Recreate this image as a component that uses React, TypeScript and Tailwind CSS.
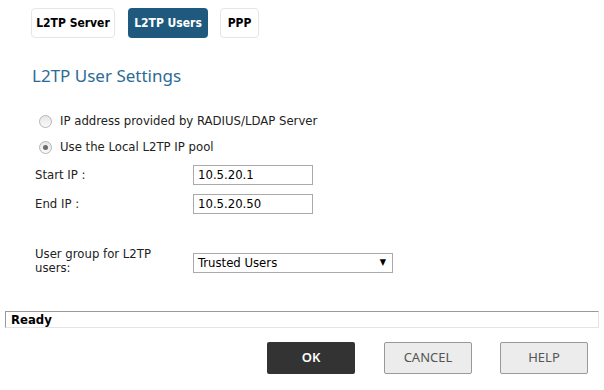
import React from "react";

const body = { fontFamily: '"DejaVu Sans Condensed", "DejaVu Sans", Tahoma, sans-serif' };
const seg = { fontFamily: '"Noto Sans", "Open Sans", sans-serif' };

function Radio({ checked }: { checked?: boolean }) {
  return (
    <span className="flex h-[13px] w-[13px] items-center justify-center rounded-full border border-[#b5b5b5] bg-[linear-gradient(#e6e6e6,#fafafa)]">
      {checked && <span className="h-[5px] w-[5px] rounded-full bg-[#6b6b6b]" />}
    </span>
  );
}

export default function App() {
  return (
    <div className="relative h-[390px] w-[604px] overflow-hidden bg-white text-[#222]" style={body}>
      <div className="flex pl-[31px] pt-[8px]">
        <div className="flex h-[30px] w-[84px] items-center justify-center rounded-[4px] border border-[#e6e6e6] text-[12px] font-bold text-black">L2TP Server</div>
        <div className="ml-[13px] flex h-[30px] w-[80px] items-center justify-center rounded-[4px] bg-[#1f5a7e] text-[12px] font-bold text-white">L2TP Users</div>
        <div className="ml-[12px] flex h-[30px] w-[39px] items-center justify-center rounded-[4px] border border-[#e6e6e6] text-[12px] font-bold text-black">PPP</div>
      </div>
      <div className="ml-[32px] mt-[26px] h-[24px] text-[17px] leading-[24px] text-[#2b6b96]" style={seg}>L2TP User Settings</div>
      <div className="ml-[39px] mt-[26px] flex h-[14px] items-center gap-[8px] text-[13px]">
        <Radio />
        <span>IP address provided by RADIUS/LDAP Server</span>
      </div>
      <div className="ml-[39px] mt-[12px] flex h-[14px] items-center gap-[8px] text-[13px]">
        <Radio checked />
        <span>Use the Local L2TP IP pool</span>
      </div>
      <div className="ml-[35px] mt-[11px] grid grid-cols-[158px_120px] gap-y-[9px] text-[13px]">
        <div className="flex h-[20px] items-center">Start IP :</div>
        <div className="flex h-[20px] items-center border border-[#aaa] px-[4px] text-black">10.5.20.1</div>
        <div className="flex h-[20px] items-center">End IP :</div>
        <div className="flex h-[20px] items-center border border-[#aaa] px-[4px] text-black">10.5.20.50</div>
      </div>
      <div className="ml-[35px] mt-[33px] grid grid-cols-[158px_200px] items-start text-[13px]">
        <div className="leading-[14px]">User group for L2TP<br />users:</div>
        <div className="mt-[6px] flex h-[20px] items-center justify-between border border-[#aaa] pl-[4px] pr-[6px] text-black">
          <span>Trusted Users</span>
          <span className="text-[9px]">▼</span>
        </div>
      </div>
      <div className="mx-[5px] mt-[36px] flex h-[17px] items-center border border-[#999] border-b-[#e4e4e4] border-r-[#e4e4e4] pl-[5px] text-[13px] font-bold text-black">Ready</div>
      <div className="ml-[267px] mt-[14px] flex">
        <div className="flex h-[32px] w-[88px] items-center justify-center rounded-[2px] bg-[#333] text-[13px] font-semibold text-white" style={seg}>OK</div>
        <div className="ml-[29px] flex h-[32px] w-[88px] items-center justify-center rounded-[2px] border border-[#999] bg-[#ececec] text-[13px] text-[#555]" style={seg}>CANCEL</div>
        <div className="ml-[28px] flex h-[32px] w-[88px] items-center justify-center rounded-[2px] border border-[#999] bg-[#ececec] text-[13px] text-[#555]" style={seg}>HELP</div>
      </div>
    </div>
  );
}
